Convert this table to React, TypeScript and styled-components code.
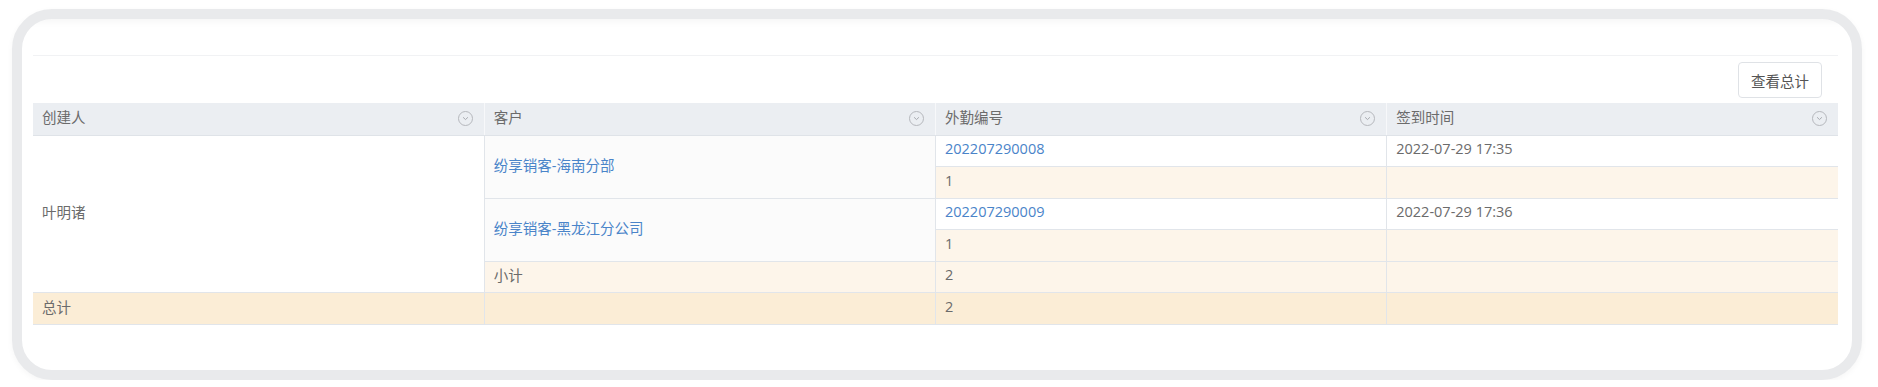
import React from 'react'
import styled, { createGlobalStyle } from 'styled-components'

const GlobalStyle = createGlobalStyle`
  html, body {
    margin: 0;
    padding: 0;
    background: #fff;
  }
  body {
    font-family: "Open Sans", "Noto Sans CJK SC", sans-serif;
    font-size: 14.5px;
    color: #6b6b6b;
  }
`

const Frame = styled.div`
  box-sizing: border-box;
  width: 1850px;
  height: 371px;
  margin: 9px 0 0 12px;
  border: 10px solid #e9eaec;
  border-radius: 40px;
  background: #fff;
  box-shadow: 0 2px 6px rgba(0, 0, 0, 0.04);
  overflow: hidden;
`

const Panel = styled.div`
  height: 100%;
  padding: 36px 14px 0 11px;
  box-sizing: border-box;
  box-shadow: inset 0 10px 12px -10px rgba(0, 0, 0, 0.06);
`

const Content = styled.div`
  border-top: 1px solid #f1f2f4;
`

const Toolbar = styled.div`
  display: flex;
  justify-content: flex-end;
  padding: 6px 16px 5px 0;
`

const Button = styled.button`
  box-sizing: border-box;
  height: 36px;
  width: 84px;
  padding: 0;
  border: 1px solid #dfe2e6;
  border-radius: 4px;
  background: #fff;
  color: #555;
  font-family: "Noto Sans CJK SC", sans-serif;
  font-size: 14.5px;
  cursor: pointer;
`

const Table = styled.table`
  width: 100%;
  table-layout: fixed;
  border-collapse: collapse;
`

const Th = styled.th`
  height: 32px;
  padding: 0 10px 5px 9px;
  background: #ebeef2;
  border-right: 1px solid #f7f8fa;
  border-bottom: 1px solid #dfe3e8;
  font-weight: normal;
  text-align: left;
  color: #6b6b6b;
  box-sizing: border-box;

  &:last-child {
    border-right: none;
  }
`

const HeadInner = styled.div`
  display: flex;
  align-items: center;
  justify-content: space-between;
  font-family: "Noto Sans CJK SC", sans-serif;

  svg {
    margin-top: 4px;
  }
`

const Row = styled.tr`
  height: 31.5px;
`

type Tone = 'plain' | 'soft' | 'sub' | 'total'

const toneBg: Record<Tone, string> = {
  plain: '#ffffff',
  soft: '#fbfbfb',
  sub: '#fdf5ea',
  total: '#fbedd6'
}

const Td = styled.td<{ $tone?: Tone }>`
  padding: 0 9px 4px;
  background: ${p => toneBg[p.$tone || 'plain']};
  border: 1px solid #e1e5ea;
  border-top: none;
  color: #6b6b6b;
  vertical-align: middle;
  white-space: nowrap;
  font-family: "Open Sans", "Noto Sans CJK SC", sans-serif;

  &:first-child {
    border-left: none;
  }
  &:last-child {
    border-right: none;
  }
`

const Link = styled.a`
  color: #4a84c9;
  text-decoration: none;
  cursor: pointer;
`

const SortIcon = () => (
  <svg width="17" height="17" viewBox="0 0 16 16" fill="none">
    <circle cx="8" cy="8" r="6.6" stroke="#b2b5ba" strokeWidth="0.9" />
    <path d="M6 7.1 L8 9 L10 7.1" stroke="#a4a7ac" strokeWidth="0.9" strokeLinecap="round" strokeLinejoin="round" />
  </svg>
)

const columns = ['创建人', '客户', '外勤编号', '签到时间']

export default function App() {
  return (
    <>
      <GlobalStyle />
      <Frame>
        <Panel>
          <Content>
            <Toolbar>
              <Button type="button">查看总计</Button>
            </Toolbar>
            <Table>
              <thead>
                <tr>
                  {columns.map(c => (
                    <Th key={c}>
                      <HeadInner>
                        <span>{c}</span>
                        <SortIcon />
                      </HeadInner>
                    </Th>
                  ))}
                </tr>
              </thead>
              <tbody>
                <Row>
                  <Td rowSpan={5}>叶明诸</Td>
                  <Td rowSpan={2} $tone="soft"><Link>纷享销客-海南分部</Link></Td>
                  <Td><Link>202207290008</Link></Td>
                  <Td>2022-07-29 17:35</Td>
                </Row>
                <Row>
                  <Td $tone="sub">1</Td>
                  <Td $tone="sub"></Td>
                </Row>
                <Row>
                  <Td rowSpan={2} $tone="soft"><Link>纷享销客-黑龙江分公司</Link></Td>
                  <Td><Link>202207290009</Link></Td>
                  <Td>2022-07-29 17:36</Td>
                </Row>
                <Row>
                  <Td $tone="sub">1</Td>
                  <Td $tone="sub"></Td>
                </Row>
                <Row>
                  <Td $tone="sub">小计</Td>
                  <Td $tone="sub">2</Td>
                  <Td $tone="sub"></Td>
                </Row>
                <Row>
                  <Td $tone="total">总计</Td>
                  <Td $tone="total"></Td>
                  <Td $tone="total">2</Td>
                  <Td $tone="total"></Td>
                </Row>
              </tbody>
            </Table>
          </Content>
        </Panel>
      </Frame>
    </>
  )
}
